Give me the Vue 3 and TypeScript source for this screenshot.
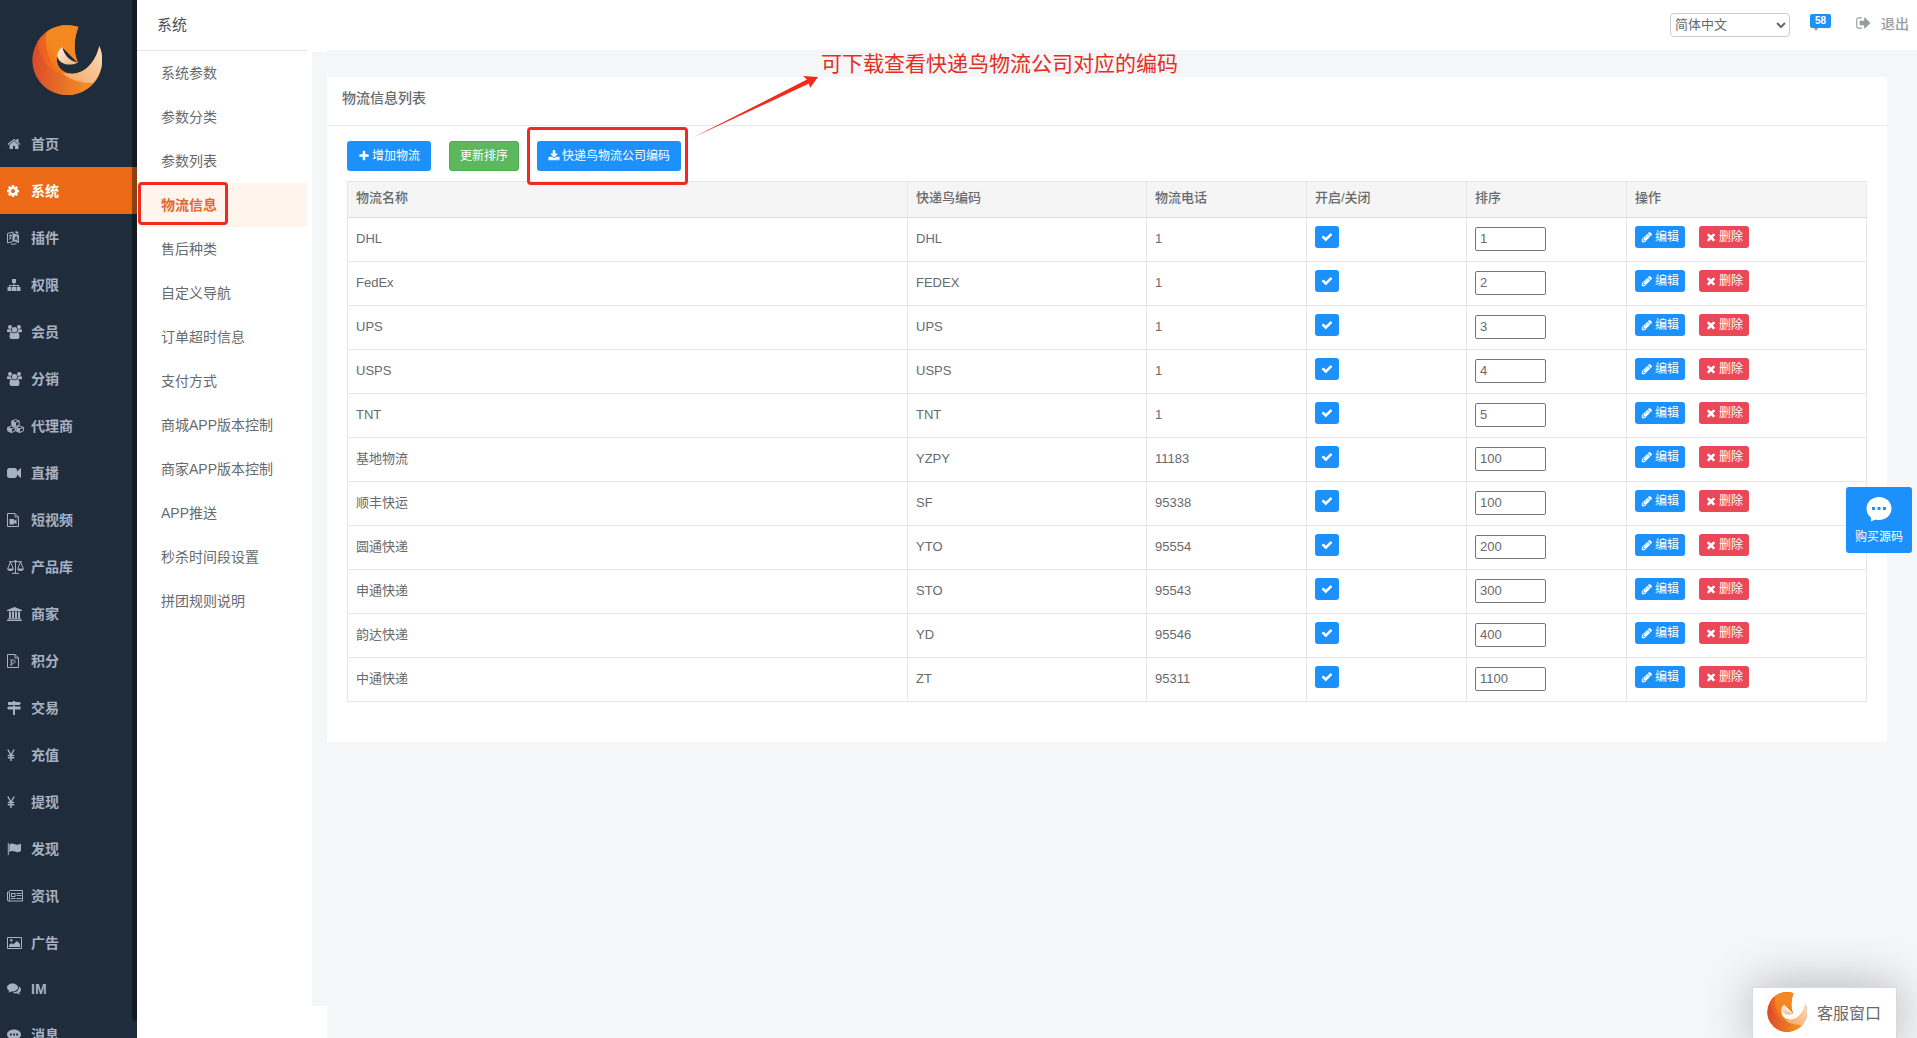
<script setup lang="ts">
import { ref } from 'vue'

interface Icon {
  w: number
  box?: string
  fill?: string
  line?: string
}

interface Carrier {
  name: string
  code: string
  phone: string
  enabled: boolean
  sort: string
}

const big = '0 0 1792 1792'

const icons: Record<string, Icon> = {
  home: { w: 14, box: big, fill: 'M1472 992v480q0 26-19 45t-45 19h-384v-384h-256v384h-384q-26 0-45-19t-19-45v-480q0-1 .5-3t.5-3l575-474 575 474q1 2 1 6zm223-69l-62 74q-8 9-21 11h-3q-13 0-21-7l-692-577-692 577q-12 8-24 7-13-2-21-11l-62-74q-8-10-7-23.5t11-21.5l719-599q32-26 76-26t76 26l244 204v-195q0-14 9-23t23-9h192q14 0 23 9t9 23v408l219 182q10 8 11 21.5t-7 23.5z' },
  cog: { w: 14, box: '128 0 1792 1792', fill: 'M1152 896q0-106-75-181t-181-75-181 75-75 181 75 181 181 75 181-75 75-181zm512-109v222q0 12-8 23t-20 13l-185 28q-19 54-39 91 35 50 107 138 10 12 10 25t-9 23q-27 37-99 108t-94 71q-12 0-26-9l-138-108q-44 23-91 38-16 136-29 186-7 28-36 28h-222q-14 0-24.5-8.5t-11.5-21.5l-28-184q-49-16-90-37l-141 107q-10 9-25 9-14 0-25-11-126-114-165-168-7-10-7-23 0-12 8-23 15-21 51-66.5t54-70.5q-27-50-41-99l-183-27q-13-2-21-12.5t-8-23.5v-222q0-12 8-23t19-13l186-28q14-46 39-92-40-57-107-138-10-12-10-24 0-10 9-23 26-36 98.5-107.5t94.5-71.5q13 0 26 10l138 107q44-23 91-38 16-136 29-186 7-28 36-28h222q14 0 24.5 8.5t11.5 21.5l28 184q49 16 90 37l142-107q9-9 24-9 13 0 25 10 129 119 165 170 7 8 7 22 0 12-8 23-15 21-51 66.5t-54 70.5q26 50 41 98l183 28q13 2 21 12.5t8 23.5z' },
  language: { w: 13, fill: 'M6 2.5L12 4v8L6 10zM8.8 5L7.4 9l.9.3.3-1 1.4.4.3 1.1.9.3L9.8 5.3zM9.3 6.3l.4 1.4-.8-.2zM8.5 0l2.5.8.5 2.2-3-.8z', line: 'M.5 2.5L6 1v9.5L.5 12zM1.8 5l3-1M3.3 3.4v1.1M2 8.8Q4 7.5 4.3 4.3M2.2 6l2.4 2.2M4 13q3 1 5.5-.6' },
  sitemap: { w: 14, fill: 'M5 1h4v4H7.5v2H12v2h1.5v4h-4V9H11V8H7.5v1H9v4H5V9h1.5V8H3v1h1.5v4h-4V9H2V7h4.5V5H5z' },
  users: { w: 15, fill: 'M1 2a2 2 0 1 1 4 0a2 2 0 1 1-4 0zM10 2a2 2 0 1 1 4 0a2 2 0 1 1-4 0zM4.8 4.8a2.7 2.7 0 1 1 5.4 0a2.7 2.7 0 1 1-5.4 0zM0 7V5.5Q0 4.2 1 4.3L4 4.5Q3.8 6 5 7.500zM15 7V5.5Q15 4.2 14 4.3L11 4.5Q11.2 6 10 7.500zM2.5 11.5Q2.5 7.2 4.8 7.4Q7.5 9 10.2 7.4Q12.5 7.2 12.5 11.5Q12.5 14 10.5 14h-6Q2.5 14 2.5 11.5z' },
  cubes: { w: 17, fill: 'M8.5 3.7L5 2.4v3.5l3.3 1.6zM4.3 9.7L1 8.4v3.2l3.1 1.8zM12.8 9.7L9.5 8.4v3.2l3.1 1.8z', line: 'M8.5.6l3.7 1.4v4L8.5 7.6 4.8 6V2zM4.8 2l3.7 1.5L12.2 2M8.5 3.5v4M4.4 7l3.8 1.4v3.5l-3.8 1.7L.6 11.9V8.4zM.6 8.4l3.8 1.4 3.8-1.4M4.4 9.8v3.8M12.6 7l3.8 1.4v3.5l-3.8 1.7-3.8-1.7V8.4zM8.8 8.4l3.8 1.4 3.8-1.4M12.6 9.8v3.8' },
  video: { w: 14, box: big, fill: 'M1792 352v1088q0 42-39 59-13 5-25 5-27 0-45-19l-403-403v166q0 119-84.5 203.5t-203.5 84.5h-704q-119 0-203.5-84.5t-84.5-203.5v-704q0-119 84.5-203.5t203.5-84.5h704q119 0 203.5 84.5t84.5 203.5v165l403-402q18-19 45-19 12 0 25 5 39 17 39 59z' },
  fileVideo: { w: 12, fill: 'M2.5 6h4.500v2l2.5-2v5.500l-2.5-2v2H2.500z', line: 'M.5.5h7.5l3.5 3.5v9.5H.5zM8 .5V4h3.5' },
  scale: { w: 17, fill: 'M8.5 0a1.2 1.2 0 0 1 0 2.4a1.2 1.2 0 0 1 0-2.4zM0 8.5h7Q6.5 11 3.5 11T0 8.5zM10 8.5h7Q16.5 11 13.5 11T10 8.5z', line: 'M2 1.7h13M8.5 2v11M5 13.4h7M3.5 2L.7 8.5M3.5 2l2.8 6.5M13.5 2l-2.8 6.5M13.5 2l2.8 6.5' },
  bank: { w: 15, fill: 'M7.5 0L15 3v1H0V3zM2 4.500h2V11H2zM5 4.500h2V11H5zM8 4.500h2V11H8zM11 4.500h2V11h-2zM1 11.3h13v1H1zM0 12.8h15V14H0z' },
  filePoint: { w: 12, line: 'M.5.5h7.5l3.5 3.5v9.5H.5zM8 .5V4h3.5M3 11h2.5M3.2 6h3.3q1.7 0 1.7 1.5T6.5 9H4.5M4.3 6v5' },
  signs: { w: 14, fill: 'M6 0h2v1h4.5L14 2.5 12.5 4H1V1h5zM6 4.5h2v1h5.5v3H8V14H6V8.5H1.5L0 7l1.5-1.5H6z' },
  yen: { w: 8, line: 'M.8 1.500L4 7l3.200-5.500M4 7v6M.8 7.500h6.400M.8 9.800h6.400' },
  flag: { w: 14, fill: 'M.8 1h1v12h-1zM2.3 2.5Q5 .8 8 2.3Q10.5 3.5 14 1.5V9Q10.5 11 8 9.6Q5.5 8.3 2.3 10z' },
  news: { w: 16, fill: 'M9.5 4h5v1h-5zM9.5 6h5v1h-5zM4 9h4.5v1H4zM9.5 9h5v1h-5zM4 4h4.5v4H4zM5 5v2h2.5V5z', line: 'M2.5 1.5h13V12h-14Q.5 12 .5 11V3h2M2.500 3v8q0 1-1 1' },
  image: { w: 15, fill: 'M3 4.200a1.300 1.300 0 1 1 2.600 0a1.300 1.300 0 1 1-2.600 0zM2 11V9l2.5-2L6 8.500 10 5l3 3v3z', line: 'M.5 1.500h14v11H.5z' },
  comments: { w: 14, fill: 'M5.5 1.5C8.5 1.5 11 3.2 11 5.5S8.5 9.5 5.5 9.5Q4.8 9.5 4.2 9.4Q2.8 10.500 1.2 10.6Q2 9.8 2.1 8.7Q0 7.5 0 5.5C0 3.2 2.5 1.5 5.5 1.5zM11.9 4.4Q14 5.5 14 7.5Q14 9.3 12.2 10.5Q12.3 11.5 13 12.4Q11.3 12.3 9.9 11.3Q7.5 11.7 5.7 10.5Q11.5 10.3 11.9 5.8z' },
  commenting: { w: 14, fill: 'M7 1.5C11 1.5 14 3.7 14 6.5S11 11.5 7 11.5Q6 11.5 5.2 11.3Q3.2 13 1 13Q2 11.8 2.2 10.2Q0 8.8 0 6.5C0 3.7 3 1.5 7 1.5zM3 5.6v1.8h1.8V5.6zM6.1 5.6v1.8h1.8V5.6zM9.2 5.6v1.8H11V5.6z' },
  check: { w: 12, box: big, fill: 'M1671 566q0 40-28 68l-724 724-136 136q-28 28-68 28t-68-28l-136-136-362-362q-28-28-28-68t28-68l136-136q28-28 68-28t68 28l294 295 656-657q28-28 68-28t68 28l136 136q28 28 28 68z' },
  plus: { w: 12, box: big, fill: 'M1600 736v192q0 40-28 68t-68 28h-416v416q0 40-28 68t-68 28h-192q-40 0-68-28t-28-68v-416h-416q-40 0-68-28t-28-68v-192q0-40 28-68t68-28h416v-416q0-40 28-68t68-28h192q40 0 68 28t28 68v416h416q40 0 68 28t28 68z' },
  download: { w: 12, box: big, fill: 'M1344 1344q0-26-19-45t-45-19-45 19-19 45 19 45 45 19 45-19 19-45zm256 0q0-26-19-45t-45-19-45 19-19 45 19 45 45 19 45-19 19-45zm128-224v320q0 40-28 68t-68 28h-1472q-40 0-68-28t-28-68v-320q0-40 28-68t68-28h465l135 136q58 56 136 56t136-56l136-136h464q40 0 68 28t28 68zm-325-569q17 41-14 70l-448 448q-18 19-45 19t-45-19l-448-448q-31-29-14-70 17-39 59-39h256v-448q0-26 19-45t45-19h256q26 0 45 19t19 45v448h256q42 0 59 39z' },
  pencil: { w: 12, box: big, fill: 'M491 1536l91-91-235-235-91 91v107h128v128h107zm523-928q0-22-22-22-10 0-17 7l-542 542q-7 7-7 17 0 22 22 22 10 0 17-7l542-542q7-7 7-17zm-54-192l416 416-832 832h-416v-416zm683 96q0 53-37 90l-166 166-416-416 166-165q36-38 90-38 53 0 91 38l235 234q37 39 37 91z' },
  times: { w: 12, box: big, fill: 'M1490 1322q0 40-28 68l-136 136q-28 28-68 28t-68-28l-294-294-294 294q-28 28-68 28t-68-28l-136-136q-28-28-28-68t28-68l294-294-294-294q-28-28-28-68t28-68l136-136q28-28 68-28t68 28l294 294 294-294q28-28 68-28t68 28l136 136q28 28 28 68t-28 68l-294 294 294 294q28 28 28 68z' },
  signOut: { w: 16, box: big, fill: 'M704 1440q0 4 1 20t.5 26.5-3 23.5-10 19.5-20.5 6.5h-320q-119 0-203.5-84.5t-84.5-203.5v-704q0-119 84.5-203.5t203.5-84.5h320q13 0 22.5 9.5t9.5 22.5q0 4 1 20t.5 26.5-3 23.5-10 19.5-20.5 6.5h-320q-66 0-113 47t-47 113v704q0 66 47 113t113 47h312l11.5 1 11.5 3 8 5.5 7 9 2 13.5zm928-544q0 26-19 45l-544 544q-19 19-45 19t-45-19-19-45v-288h-448q-26 0-45-19t-19-45v-384q0-26 19-45t45-19h448v-288q0-26 19-45t45-19 45 19l544 544q19 19 19 45z' },
}

const nav = [
  { icon: 'home', label: '首页' },
  { icon: 'cog', label: '系统', active: true },
  { icon: 'language', label: '插件' },
  { icon: 'sitemap', label: '权限' },
  { icon: 'users', label: '会员' },
  { icon: 'users', label: '分销' },
  { icon: 'cubes', label: '代理商' },
  { icon: 'video', label: '直播' },
  { icon: 'fileVideo', label: '短视频' },
  { icon: 'scale', label: '产品库' },
  { icon: 'bank', label: '商家' },
  { icon: 'filePoint', label: '积分' },
  { icon: 'signs', label: '交易' },
  { icon: 'yen', label: '充值' },
  { icon: 'yen', label: '提现' },
  { icon: 'flag', label: '发现' },
  { icon: 'news', label: '资讯' },
  { icon: 'image', label: '广告' },
  { icon: 'comments', label: 'IM', short: true },
  { icon: 'commenting', label: '消息' },
]

const subNav = [
  '系统参数', '参数分类', '参数列表', '物流信息', '售后种类', '自定义导航', '订单超时信息',
  '支付方式', '商城APP版本控制', '商家APP版本控制', 'APP推送', '秒杀时间段设置', '拼团规则说明',
]
const current = '物流信息'

const row = (name: string, code: string, phone: string, sort: string): Carrier => ({ name, code, phone, sort, enabled: true })

const carriers = ref<Carrier[]>([
  row('DHL', 'DHL', '1', '1'),
  row('FedEx', 'FEDEX', '1', '2'),
  row('UPS', 'UPS', '1', '3'),
  row('USPS', 'USPS', '1', '4'),
  row('TNT', 'TNT', '1', '5'),
  row('基地物流', 'YZPY', '11183', '100'),
  row('顺丰快运', 'SF', '95338', '100'),
  row('圆通快递', 'YTO', '95554', '200'),
  row('申通快递', 'STO', '95543', '300'),
  row('韵达快递', 'YD', '95546', '400'),
  row('中通快递', 'ZT', '95311', '1100'),
])

const lang = ref('zh')
</script>

<template>
  <div class="page">
    <svg class="defs" aria-hidden="true">
      <defs>
        <linearGradient id="lg-body" x1="0" y1="0.6" x2="1" y2="0.7">
          <stop offset="0" stop-color="#dc4a2a" />
          <stop offset="0.75" stop-color="#f08a24" />
        </linearGradient>
        <linearGradient id="lg-mid" x1="0" y1="0.5" x2="1" y2="0.5">
          <stop offset="0" stop-color="#e85a22" />
          <stop offset="0.5" stop-color="#f5741a" />
        </linearGradient>
        <linearGradient id="lg-top" x1="0" y1="1" x2="1" y2="0">
          <stop offset="0" stop-color="#f06a1b" />
          <stop offset="0.4" stop-color="#f48820" />
        </linearGradient>
        <linearGradient id="lg-pale" x1="0" y1="1" x2="1" y2="0">
          <stop offset="0" stop-color="#f6a55c" />
          <stop offset="1" stop-color="#f9dcc0" />
        </linearGradient>
        <linearGradient id="lg-leaf" x1="0" y1="0" x2="1" y2="1">
          <stop offset="0.1" stop-color="#fdeee2" />
          <stop offset="1" stop-color="#f5ad6c" />
        </linearGradient>
      </defs>
      <symbol id="brand" viewBox="0 0 210 210">
        <path fill="url(#lg-body)" d="M139 6A105 105 0 1 0 202 63C190 115 155 147 119 146C90 145 70 122 75 92L91 67L138 113C122 80 126 38 139 6z" />
        <path fill="url(#lg-mid)" d="M139 6A105 105 0 0 0 16 50C22 105 50 135 92 148L119 146C90 145 70 122 75 92L91 67L138 113C122 80 126 38 139 6z" />
        <path fill="url(#lg-top)" d="M139 6A105 105 0 0 0 43 21C36 70 52 120 88 142C74 130 71 112 75 92L91 67L138 113C122 80 126 38 139 6z" />
        <path fill="url(#lg-pale)" d="M202 63C190 115 155 147 119 146Q105 146 88 143C120 168 150 174 184 174A105 105 0 0 0 202 63z" />
        <path fill="url(#lg-leaf)" d="M91 66C80 76 73 88 76 96C86 120 112 124 138 113C112 108 96 90 91 66z" />
      </symbol>
    </svg>

    <aside class="sidebar">
      <a class="brand" href="#" aria-label="首页">
        <svg width="70" height="70"><use href="#brand" /></svg>
      </a>
      <nav>
        <a
          v-for="(n, i) in nav"
          :key="i"
          href="#"
          class="nav-item"
          :class="{ active: n.active, short: n.short }"
        >
          <span class="nav-icon">
            <svg :width="icons[n.icon].w" height="14" :viewBox="icons[n.icon].box ?? `0 0 ${icons[n.icon].w} 14`">
              <path v-if="icons[n.icon].fill" :d="icons[n.icon].fill" fill="currentColor" fill-rule="evenodd" />
              <path v-if="icons[n.icon].line" :d="icons[n.icon].line" fill="none" stroke="currentColor" :stroke-width="n.icon === 'yen' ? 1.4 : 1" />
            </svg>
          </span>
          {{ n.label }}
        </a>
      </nav>
      <div class="scroll-thumb"></div>
    </aside>

    <aside class="submenu">
      <div class="sub-col">
        <h2>系统</h2>
        <ul>
          <li v-for="s in subNav" :key="s" :class="{ active: s === current }">
            <a href="#">{{ s }}</a>
          </li>
        </ul>
      </div>
      <div class="sub-strip"></div>
    </aside>

    <div class="main">
      <header class="topbar">
        <select v-model="lang" aria-label="语言">
          <option value="zh">简体中文</option>
        </select>
        <a class="inbox" href="#">
          <svg width="16" height="14" viewBox="0 0 16 14"><path d="M1 0h14v9H9l-3 4-3-4H1z" fill="#999c9e" /></svg>
          <span class="badge">58</span>
        </a>
        <a class="logout" href="#">
          <svg width="16" height="16" viewBox="0 0 1660 1792"><path :d="icons.signOut.fill" fill="currentColor" /></svg>
          <span>退出</span>
        </a>
      </header>

      <main class="content">
        <section class="panel">
          <h1>物流信息列表</h1>
          <div class="panel-body">
            <div class="toolbar">
              <button type="button" class="btn blue">
                <svg width="12" height="12" :viewBox="big"><path :d="icons.plus.fill" fill="currentColor" /></svg>
                增加物流
              </button>
              <button type="button" class="btn green">更新排序</button>
              <div class="marked">
                <button type="button" class="btn blue">
                  <svg width="12" height="12" :viewBox="big"><path :d="icons.download.fill" fill="currentColor" /></svg>
                  快递鸟物流公司编码
                </button>
                <svg class="arrow" width="126" height="64" viewBox="0 0 126 64">
                  <path d="M0 61.500L114 3.500 110 0 125 1 117 12 116 7.500z" fill="#f5281a" />
                </svg>
                <p class="note">可下载查看快递鸟物流公司对应的编码</p>
              </div>
            </div>

            <table>
              <colgroup>
                <col />
                <col class="c-code" />
                <col class="c-mid" />
                <col class="c-mid" />
                <col class="c-mid" />
                <col class="c-ops" />
              </colgroup>
              <thead>
                <tr>
                  <th>物流名称</th>
                  <th>快递鸟编码</th>
                  <th>物流电话</th>
                  <th>开启/关闭</th>
                  <th>排序</th>
                  <th>操作</th>
                </tr>
              </thead>
              <tbody>
                <tr v-for="(c, i) in carriers" :key="i">
                  <td>{{ c.name }}</td>
                  <td>{{ c.code }}</td>
                  <td>{{ c.phone }}</td>
                  <td>
                    <label class="toggle">
                      <input v-model="c.enabled" type="checkbox" :aria-label="c.name" />
                      <svg v-if="c.enabled" width="12" height="12" :viewBox="big"><path :d="icons.check.fill" fill="#fff" /></svg>
                    </label>
                  </td>
                  <td><input v-model="c.sort" class="sort" type="text" aria-label="排序" /></td>
                  <td>
                    <div class="actions">
                      <button type="button" class="btn mini blue">
                        <svg width="12" height="12" :viewBox="big"><path :d="icons.pencil.fill" fill="currentColor" /></svg>
                        编辑
                      </button>
                      <button type="button" class="btn mini red">
                        <svg width="12" height="12" :viewBox="big"><path :d="icons.times.fill" fill="currentColor" /></svg>
                        删除
                      </button>
                    </div>
                  </td>
                </tr>
              </tbody>
            </table>
          </div>
        </section>
      </main>
    </div>

    <button type="button" class="buy">
      <svg width="26" height="26" viewBox="0 0 26 26">
        <path fill="#fff" fill-rule="evenodd" d="M13 1C20 1 25.500 6 25.500 12.500S20 24 13 24Q11 24 9.500 23.500L5 25.500V21.500Q.5 18 .5 12.500C.5 6 6 1 13 1zM6 11v3h3v-3zM11.500 11v3h3v-3zM17 11v3h3v-3z" />
      </svg>
      购买源码
    </button>

    <button type="button" class="chat">
      <svg width="40" height="40"><use href="#brand" /></svg>
      客服窗口
    </button>
  </div>
</template>

<style>
body {
  margin: 0;
  background: #f5f6f8;
}
</style>

<style scoped>
.page {
  display: flex;
  height: 100vh;
  overflow: hidden;
  position: relative;
  background: #f5f6f8;
  color: #676a6c;
  font-family: "Liberation Sans", "Noto Sans CJK SC", sans-serif;
  font-size: 13px;
}
.page,
.page *,
.page *::after {
  box-sizing: border-box;
}
.defs {
  position: absolute;
  width: 0;
  height: 0;
}
a {
  color: inherit;
  text-decoration: none;
}
button,
input,
select {
  font-family: inherit;
  color: inherit;
  margin: 0;
}
svg {
  display: block;
  flex: none;
}

.sidebar {
  position: relative;
  flex: none;
  width: 137px;
  overflow: hidden;
  background: #1f2c3c;
  color: #a7b1c2;
}
.brand {
  display: block;
  height: 120px;
  padding: 25px 32px;
}
.nav-item {
  display: flex;
  align-items: center;
  height: 47px;
  padding-left: 7px;
  font-size: 14px;
  font-weight: 600;
  line-height: 20px;
}
.nav-item.short {
  height: 45px;
}
.nav-item.active {
  background: #ec6a17;
  color: #fff;
}
.nav-icon {
  flex: none;
  width: 24px;
}
.scroll-thumb {
  position: absolute;
  top: 0;
  right: 0;
  bottom: 17px;
  width: 5px;
  border-radius: 0 0 3px 3px;
  background: rgba(0, 0, 0, 0.4);
}

.submenu {
  display: flex;
  flex: none;
  width: 190px;
  background: #fff;
}
.sub-col {
  width: 170px;
}
.sub-col h2 {
  height: 51px;
  margin: 0;
  padding-left: 20px;
  border-bottom: 1px solid #e4e6e8;
  font-size: 15px;
  font-weight: 400;
  line-height: 50px;
  color: #4c5158;
}
.sub-col ul {
  margin: 0;
  padding: 0;
  list-style: none;
}
.sub-col li a {
  display: block;
  height: 44px;
  padding-left: 24px;
  font-size: 14px;
  line-height: 44px;
}
.sub-col li.active {
  position: relative;
  background: #fff5ec;
  color: #e0692e;
  font-weight: 600;
}
.sub-col li.active::after {
  content: "";
  position: absolute;
  top: -1px;
  left: 1px;
  width: 90px;
  height: 43px;
  border: 3px solid #f02a20;
  border-radius: 4px;
}
.sub-strip {
  width: 15px;
  margin: 52px 0 32px 5px;
  background: #f5f6f8;
}

.main {
  flex: 1;
  min-width: 0;
}
.topbar {
  display: flex;
  justify-content: flex-end;
  align-items: flex-start;
  height: 50px;
  padding: 13px 8px 0 0;
  background: #fff;
}
.topbar select {
  width: 120px;
  height: 24px;
  padding: 0 0 2px;
  border: 1px solid #ccc;
  border-radius: 4px;
  background: #fff;
  font-size: 13px;
}
.inbox {
  position: relative;
  width: 21px;
  height: 18px;
  margin: 1px 0 0 20px;
}
.inbox svg {
  margin-top: 4px;
}
.badge {
  position: absolute;
  top: 0;
  left: 0;
  width: 21px;
  height: 14px;
  border-radius: 2px;
  background: #1c90fb;
  color: #fff;
  font-size: 10px;
  font-weight: 600;
  line-height: 14px;
  text-align: center;
}
.logout {
  display: flex;
  align-items: center;
  gap: 10px;
  height: 20px;
  margin-left: 24px;
  color: #999c9e;
  font-size: 14px;
  font-weight: 500;
}

.content {
  padding: 27px 30px 0 0;
}
.panel {
  background: #fff;
}
.panel h1 {
  height: 49px;
  margin: 0;
  padding-left: 15px;
  border-bottom: 1px solid #e7e8ea;
  font-size: 14px;
  font-weight: 500;
  line-height: 42px;
}
.panel-body {
  padding: 15px 20px 40px;
}
.toolbar {
  display: flex;
  gap: 18px;
  margin-bottom: 10px;
}
.btn {
  display: flex;
  align-items: center;
  justify-content: center;
  gap: 2px;
  height: 30px;
  padding: 0 10px;
  border: 1px solid transparent;
  border-radius: 3px;
  color: #fff;
  font-size: 12px;
  line-height: 18px;
  white-space: nowrap;
}
.blue {
  background: #1c90fb;
}
.green {
  background: #5cb85c;
  border-color: #4cae4c;
}
.red {
  background: #ec4758;
}
.marked {
  position: relative;
}
.marked::after {
  content: "";
  position: absolute;
  top: -14px;
  left: -10px;
  right: -7px;
  height: 58px;
  border: 3px solid #f02a20;
  border-radius: 4px;
  pointer-events: none;
}
.arrow {
  position: absolute;
  top: -65px;
  left: 156px;
}
.note {
  position: absolute;
  top: -93px;
  left: 284px;
  margin: 0;
  color: #e52e22;
  font-size: 21px;
  line-height: 32px;
  white-space: nowrap;
}

table {
  width: 100%;
  table-layout: fixed;
  border-collapse: collapse;
}
.c-code {
  width: 239px;
}
.c-ops {
  width: 240px;
}
.c-mid {
  width: 160px;
}
th,
td {
  border: 1px solid #e7e7e7;
  text-align: left;
  vertical-align: top;
}
th {
  height: 36px;
  padding: 6px 8px 0;
  border-bottom-color: #ddd;
  background: #f5f5f6;
  font-size: 13px;
  font-weight: 500;
  line-height: 20px;
}
td {
  height: 44px;
  padding: 8px 8px 0;
  line-height: 26px;
}
.toggle {
  display: grid;
  place-items: center;
  width: 24px;
  height: 22px;
}
.toggle input,
.toggle svg {
  grid-area: 1 / 1;
}
.toggle svg {
  z-index: 1;
  pointer-events: none;
}
.toggle input {
  appearance: none;
  width: 24px;
  height: 22px;
  border-radius: 3px;
  background: #1c90fb;
}
.sort {
  display: block;
  width: 71px;
  height: 24px;
  margin-top: 1px;
  padding: 0 4px 2px;
  border: 1px solid #767676;
  border-radius: 2px;
  background: #fff;
  font-size: 13px;
}
.actions {
  display: flex;
  gap: 14px;
}
.mini {
  height: 22px;
  padding: 0 5px;
}

.buy {
  position: absolute;
  right: 5px;
  top: 487px;
  display: flex;
  flex-direction: column;
  align-items: center;
  gap: 6px;
  width: 66px;
  height: 66px;
  padding: 9px 0 0;
  border: 0;
  border-radius: 3px;
  background: #1c90fb;
  color: #fff;
  font-size: 12px;
  line-height: 18px;
}
.chat {
  position: absolute;
  right: 20px;
  bottom: 0;
  display: flex;
  align-items: center;
  gap: 10px;
  width: 145px;
  height: 51px;
  padding: 0 0 2px 14px;
  border: 1px solid #d9d9d9;
  border-bottom: 0;
  border-radius: 2px 2px 0 0;
  background: #fff;
  box-shadow: 1px 1px 50px rgba(0, 0, 0, 0.3);
  font-size: 16px;
}
</style>
